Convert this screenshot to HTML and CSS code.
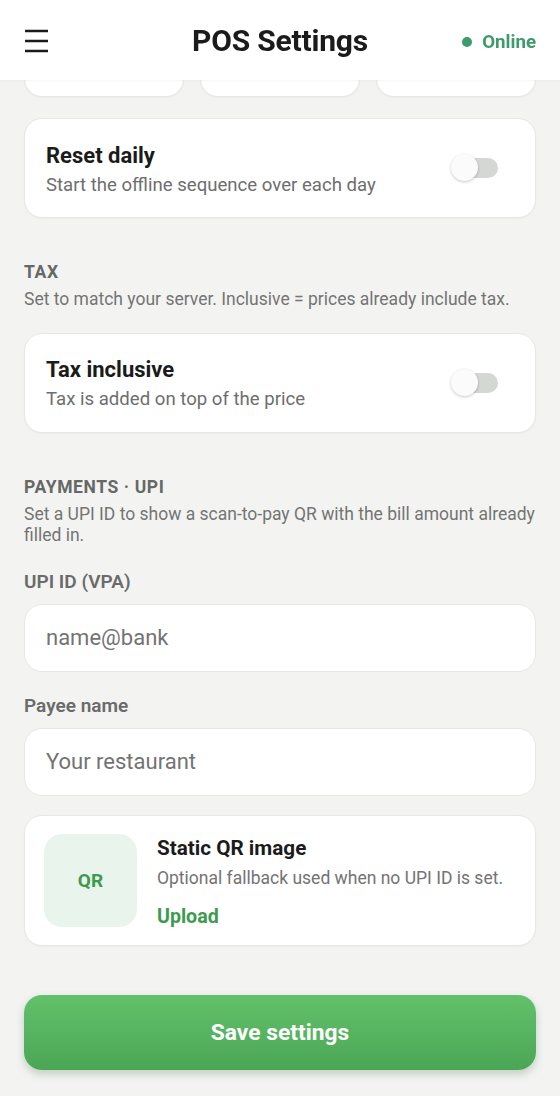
FILE: index.html
```html
<!DOCTYPE html>
<html lang="en">
<head>
<meta charset="utf-8">
<title>POS Settings</title>
<link rel="stylesheet" href="styles.css">
</head>
<body>
<header class="topbar">
  <button class="menu-btn" aria-label="Menu">
    <svg width="26" height="24" viewBox="0 0 26 24"><path d="M1 2h23M1 12h23M1 22h23" stroke="#1b1b1b" stroke-width="2.6" fill="none"/></svg>
  </button>
  <h1 class="title">POS Settings</h1>
  <div class="status"><span class="dot"></span>Online</div>
</header>

<main class="content">
  <div class="stub-row">
    <div class="card stub"></div>
    <div class="card stub"></div>
    <div class="card stub"></div>
  </div>

  <div class="card toggle-card first-card">
    <div class="toggle-text">
      <div class="card-title">Reset daily</div>
      <div class="card-sub">Start the offline sequence over each day</div>
    </div>
    <span class="switch"><span class="thumb"></span></span>
  </div>

  <section class="section">
    <h2 class="section-label">Tax</h2>
    <p class="section-desc">Set to match your server. Inclusive = prices already include tax.</p>
    <div class="card toggle-card">
      <div class="toggle-text">
        <div class="card-title">Tax inclusive</div>
        <div class="card-sub">Tax is added on top of the price</div>
      </div>
      <span class="switch"><span class="thumb"></span></span>
    </div>
  </section>

  <section class="section">
    <h2 class="section-label">Payments · UPI</h2>
    <p class="section-desc">Set a UPI ID to show a scan-to-pay QR with the bill amount already filled in.</p>
    <label class="field-label" for="upi">UPI ID (VPA)</label>
    <input class="field" id="upi" type="text" placeholder="name@bank">
    <label class="field-label" for="payee">Payee name</label>
    <input class="field" id="payee" type="text" placeholder="Your restaurant">
    <div class="card qr-card">
      <div class="qr-box">QR</div>
      <div class="qr-text">
        <div class="qr-title">Static QR image</div>
        <div class="qr-sub">Optional fallback used when no UPI ID is set.</div>
        <div class="qr-upload">Upload</div>
      </div>
    </div>
  </section>

  <button class="save-btn">Save settings</button>
</main>
</body>
</html>
```

FILE: styles.css
```css
* { box-sizing: border-box; }

html, body {
  margin: 0;
  padding: 0;
}

body {
  background: #f3f4f2;
  font-family: Roboto, "Noto Sans", "Liberation Sans", sans-serif;
  color: #1b1b1b;
  width: 560px;
  height: 1096px;
  overflow: hidden;
}

.topbar {
  position: fixed;
  top: 0;
  left: 0;
  right: 0;
  height: 80px;
  background: #ffffff;
  display: flex;
  align-items: center;
  justify-content: space-between;
  padding: 0 24px 0 24px;
  z-index: 5;
  box-shadow: 0 1px 3px rgba(0,0,0,0.04);
}

.menu-btn {
  border: 0;
  background: none;
  padding: 0;
  width: 26px;
  height: 24px;
  display: flex;
  margin-top: 2px;
}

.title {
  margin: 0;
  font-size: 30px;
  font-weight: 700;
  color: #1b1b1b;
  letter-spacing: -0.2px;
  position: absolute;
  left: 0;
  right: 0;
  text-align: center;
  pointer-events: none;
  line-height: 87px;
}

.status {
  display: flex;
  align-items: center;
  gap: 10px;
  font-size: 18.7px;
  font-weight: 700;
  color: #3d9b6c;
  margin-top: 3px;
}

.dot {
  width: 10px;
  height: 10px;
  border-radius: 50%;
  background: #3d9b6c;
}

.content {
  padding: 37px 24px 0;
  display: flex;
  flex-direction: column;
}

.card {
  background: #ffffff;
  border: 1px solid #e7e8e5;
  border-radius: 18px;
  box-shadow: 0 1px 2px rgba(0,0,0,0.03);
}

.stub-row {
  display: grid;
  grid-template-columns: repeat(3, 1fr);
  gap: 16px;
}

.stub {
  height: 60px;
}

.toggle-card {
  display: flex;
  align-items: center;
  justify-content: space-between;
  height: 100px;
  padding: 3px 37px 0 21px;
}

.first-card {
  margin-top: 21px;
}

.card-title {
  font-size: 22px;
  font-weight: 700;
  color: #1b1b1b;
  line-height: 26px;
}

.card-sub {
  font-size: 18.6px;
  color: #6e6e6e;
  line-height: 24px;
  margin-top: 4px;
}

.switch {
  position: relative;
  width: 46px;
  height: 20px;
  background: #d5d7d4;
  border-radius: 10px;
  display: block;
  margin-top: -3px;
}

.thumb {
  position: absolute;
  left: -1px;
  top: -4px;
  width: 27px;
  height: 27px;
  border-radius: 50%;
  background: #fbfbfb;
  box-shadow: 0 1px 3px rgba(0,0,0,0.22);
}

.section {
  display: flex;
  flex-direction: column;
  margin-top: 44px;
}

.section-label {
  margin: 0;
  font-size: 17.5px;
  font-weight: 700;
  text-transform: uppercase;
  letter-spacing: 0.6px;
  color: #666866;
  line-height: 20px;
}

.section-desc {
  margin: 7px 0 0;
  font-size: 17.5px;
  line-height: 21.5px;
  color: #737573;
}

.section-desc + .card {
  margin-top: 22px;
}

.field-label {
  font-size: 19px;
  font-weight: 600;
  color: #6a6b6a;
  line-height: 24px;
  margin-top: 23px;
}

.field {
  margin-top: 10px;
  height: 68px;
  border: 1px solid #e7e8e5;
  border-radius: 18px;
  background: #ffffff;
  padding: 0 21px;
  font-family: inherit;
  font-size: 22px;
  color: #1b1b1b;
  outline: none;
}

.field::placeholder {
  color: #737373;
}

.field + .field-label {
  margin-top: 22px;
}

.qr-card {
  margin-top: 19px;
  display: flex;
  align-items: flex-start;
  gap: 20px;
  padding: 18px 19px;
  height: 131px;
}

.qr-box {
  width: 93px;
  height: 93px;
  flex: none;
  border-radius: 18px;
  background: #e9f4ed;
  display: flex;
  align-items: center;
  justify-content: center;
  font-size: 19px;
  font-weight: 700;
  color: #3e9a4f;
}

.qr-text {
  display: flex;
  flex-direction: column;
  padding-top: 1px;
}

.qr-title {
  font-size: 20.7px;
  font-weight: 700;
  line-height: 26px;
  color: #1b1b1b;
}

.qr-sub {
  font-size: 17.5px;
  line-height: 22px;
  color: #737373;
  margin-top: 6px;
}

.qr-upload {
  font-size: 19.6px;
  font-weight: 700;
  color: #3e9a4f;
  line-height: 24px;
  margin-top: 16px;
}

.save-btn {
  margin-top: 49px;
  height: 75px;
  border: 0;
  border-radius: 18px;
  background: linear-gradient(#63c16b, #4aa655);
  color: #ffffff;
  font-family: inherit;
  font-size: 22.8px;
  font-weight: 700;
  box-shadow: 0 4px 8px rgba(40,90,45,0.25);
}
```
